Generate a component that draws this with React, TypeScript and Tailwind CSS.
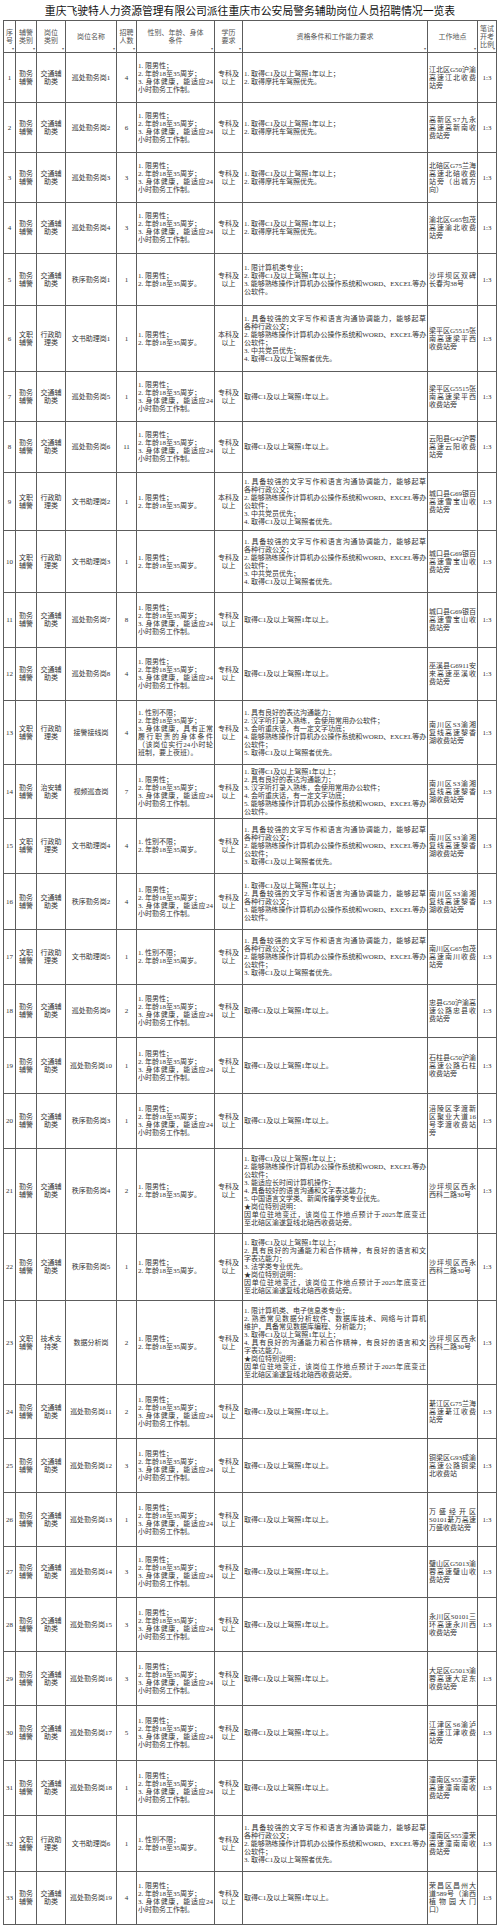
import type { ReactNode } from "react";

type Row = {
  kind: string[];
  cat: string[];
  name: string;
  count: number;
  body: string[];
  edu: string[];
  req: string[];
  place: string[];
  h: string;
};

const QIN = ["勤务", "辅警"];
const WEN = ["文职", "辅警"];
const JT = ["交通辅", "助类"];
const XZ = ["行政助", "理类"];
const ZK = ["专科及", "以上"];
const BK = ["本科及", "以上"];

const A = ["1. 限男性；", "2. 年龄18至35周岁；", "3. 身体健康，能适应24", "小时勤务工作制。"];
const B = ["1. 限男性；", "2. 年龄18至35周岁。"];
const C = ["1. 性别不限；", "2. 年龄18至35周岁。"];

const Q1 = ["1. 取得C1及以上驾照1年以上；", "2. 取得摩托车驾照优先。"];
const Q2 = ["取得C1及以上驾照1年以上。"];
const OFFICE = "能够熟练操作计算机办公操作系统和WORD、EXCEL等办";
const WEN4 = [
  "1. 具备较强的文字写作和语言沟通协调能力，能够起草",
  "各种行政公文；",
  "2. " + OFFICE,
  "公软件；",
  "3. 中共党员优先；",
  "4. 取得C1及以上驾照者优先。",
];
const WEN3 = [
  "1. 具备较强的文字写作和语言沟通协调能力，能够起草",
  "各种行政公文；",
  "2. " + OFFICE,
  "公软件；",
  "3. 取得C1及以上驾照者优先。",
];
const MOVE = [
  "★岗位特别说明：",
  "因单位驻地变迁，该岗位工作地点预计于2025年底变迁",
  "至北碚区渝遂复线北碚西收费站旁。",
];

const NC = ["南川区S3渝湘", "复线高速黎香", "湖收费站旁"];
const CK = ["城口县G69银百", "高速雪宝山收", "费站旁"];
const LP = ["梁平区G5515张", "南高速梁平西", "收费站旁"];
const SPB = ["沙坪坝区西永", "西科二路30号"];
const TN = ["潼南区S55潼荣", "高速潼南南收", "费站旁"];

const rows: Row[] = [
  { kind: QIN, cat: JT, name: "巡处勤务岗1", count: 4, body: A, edu: ZK, req: Q1, place: ["江北区G50沪渝", "高速江北收费", "站旁"], h: "h-[50px]" },
  { kind: QIN, cat: JT, name: "巡处勤务岗2", count: 6, body: A, edu: ZK, req: Q1, place: ["高新区S7九永", "高速高新南收", "费站旁"], h: "h-[50px]" },
  { kind: QIN, cat: JT, name: "巡处勤务岗3", count: 3, body: A, edu: ZK, req: Q1, place: ["北碚区G75兰海", "高速北碚收费", "站旁（出城方", "向）"], h: "h-[50px]" },
  { kind: QIN, cat: JT, name: "巡处勤务岗4", count: 3, body: A, edu: ZK, req: Q1, place: ["渝北区G65包茂", "高速渝北收费", "站旁"], h: "h-[51px]" },
  {
    kind: QIN, cat: JT, name: "秩序勤务岗1", count: 1, body: B, edu: ZK,
    req: ["1. 限计算机类专业；", "2. 取得C1及以上驾照1年以上；", "3. " + OFFICE, "公软件。"],
    place: ["沙坪坝区双碑", "长春沟38号"], h: "h-[52px]",
  },
  { kind: WEN, cat: XZ, name: "文书助理岗1", count: 1, body: B, edu: BK, req: WEN4, place: LP, h: "h-[66px]" },
  { kind: QIN, cat: JT, name: "巡处勤务岗5", count: 1, body: A, edu: ZK, req: Q2, place: LP, h: "h-[50px]" },
  { kind: QIN, cat: JT, name: "巡处勤务岗6", count: 11, body: A, edu: ZK, req: Q2, place: ["云阳县G42沪蓉", "高速云阳收费", "站旁"], h: "h-[51px]" },
  { kind: WEN, cat: XZ, name: "文书助理岗2", count: 1, body: B, edu: BK, req: WEN4, place: CK, h: "h-[58px]" },
  { kind: WEN, cat: XZ, name: "文书助理岗3", count: 1, body: B, edu: ZK, req: WEN4, place: CK, h: "h-[62px]" },
  { kind: QIN, cat: JT, name: "巡处勤务岗7", count: 8, body: A, edu: ZK, req: Q2, place: CK, h: "h-[55px]" },
  { kind: QIN, cat: JT, name: "巡处勤务岗8", count: 4, body: A, edu: ZK, req: Q2, place: ["巫溪县G6911安", "来高速巫溪收", "费站旁"], h: "h-[53px]" },
  {
    kind: WEN, cat: XZ, name: "接警接线岗", count: 4,
    body: ["1. 性别不限；", "2. 年龄18至35周岁；", "3. 身体健康，具有正常", "履行职责的身体条件", "（该岗位实行24小时轮", "班制，要上夜班）。"],
    edu: ZK,
    req: [
      "1. 具有良好的表达沟通能力；",
      "2. 汉字听打录入熟练，会使用常用办公软件；",
      "3. 会听重庆话，有一定文字功底；",
      "4. " + OFFICE,
      "公软件；",
      "5. 取得C1及以上驾照者优先。",
    ],
    place: NC, h: "h-[64px]",
  },
  {
    kind: QIN, cat: ["治安辅", "助类"], name: "视频巡查岗", count: 7, body: A, edu: ZK,
    req: [
      "1. 取得C1及以上驾照1年以上；",
      "2. 具有良好的表达沟通能力；",
      "3. 汉字听打录入熟练，会使用常用办公软件；",
      "4. 会听重庆话，有一定文字功底；",
      "5. " + OFFICE,
      "公软件。",
    ],
    place: NC, h: "h-[54px]",
  },
  { kind: WEN, cat: XZ, name: "文书助理岗4", count: 4, body: C, edu: ZK, req: WEN3, place: NC, h: "h-[55px]" },
  {
    kind: QIN, cat: JT, name: "秩序勤务岗2", count: 4, body: A, edu: ZK,
    req: [
      "1. 取得C1及以上驾照1年以上；",
      "2. 具备较强的文字写作和语言沟通协调能力，能够起草",
      "各种行政公文；",
      "3. " + OFFICE,
      "公软件。",
    ],
    place: NC, h: "h-[56px]",
  },
  { kind: WEN, cat: XZ, name: "文书助理岗5", count: 1, body: C, edu: ZK, req: WEN3, place: ["南川区G65包茂", "高速南川收费", "站旁"], h: "h-[55px]" },
  { kind: QIN, cat: JT, name: "巡处勤务岗9", count: 2, body: A, edu: ZK, req: Q2, place: ["忠县G50沪渝高", "速公路忠县收", "费站旁"], h: "h-[53px]" },
  { kind: QIN, cat: JT, name: "巡处勤务岗10", count: 1, body: A, edu: ZK, req: Q2, place: ["石柱县G50沪渝", "高速公路石柱", "收费站旁"], h: "h-[56px]" },
  { kind: QIN, cat: JT, name: "秩序勤务岗3", count: 1, body: A, edu: ZK, req: Q2, place: ["涪陵区李渡新", "区聚业大道16", "号李渡收费站", "旁"], h: "h-[55px]" },
  {
    kind: QIN, cat: JT, name: "秩序勤务岗4", count: 2, body: B, edu: ZK,
    req: [
      "1. 取得C1及以上驾照1年以上；",
      "2. " + OFFICE,
      "公软件；",
      "3. 能适应长时间计算机操作；",
      "4. 具备较好的语言沟通和文字表达能力；",
      "5. 中国语言文学类、新闻传播学类专业优先。",
      ...MOVE,
    ],
    place: SPB, h: "h-[85px]",
  },
  {
    kind: QIN, cat: JT, name: "秩序勤务岗5", count: 1, body: B, edu: ZK,
    req: [
      "1. 取得C1及以上驾照1年以上；",
      "2. 具有良好的沟通能力和合作精神，有良好的语言和文",
      "字表达能力；",
      "3. 法学类专业优先。",
      ...MOVE,
    ],
    place: SPB, h: "h-[67px]",
  },
  {
    kind: WEN, cat: ["技术支", "持类"], name: "数据分析岗", count: 2, body: B, edu: ZK,
    req: [
      "1. 限计算机类、电子信息类专业；",
      "2. 熟悉常见数据分析软件、数据库技术、网络与计算机",
      "维护，具备常见数据库编程、分析能力；",
      "3. 取得C1及以上驾照1年以上；",
      "4. 具有良好的沟通能力和合作精神，有良好的语言和文",
      "字表达能力。",
      ...MOVE,
    ],
    place: SPB, h: "h-[84px]",
  },
  { kind: QIN, cat: JT, name: "巡处勤务岗11", count: 2, body: A, edu: ZK, req: Q2, place: ["綦江区G75兰海", "高速綦江收费", "站旁"], h: "h-[54px]" },
  { kind: QIN, cat: JT, name: "巡处勤务岗12", count: 3, body: A, edu: ZK, req: Q2, place: ["铜梁区G93成渝", "高速公路铜梁", "北收费站"], h: "h-[54px]" },
  { kind: QIN, cat: JT, name: "巡处勤务岗13", count: 1, body: A, edu: ZK, req: Q2, place: ["万盛经开区", "S0101綦万高速", "万盛收费站旁"], h: "h-[54px]" },
  { kind: QIN, cat: JT, name: "巡处勤务岗14", count: 3, body: A, edu: ZK, req: Q2, place: ["璧山区G5013渝", "蓉高速璧山收", "费站旁"], h: "h-[51px]" },
  { kind: QIN, cat: JT, name: "巡处勤务岗15", count: 3, body: A, edu: ZK, req: Q2, place: ["永川区S0101三", "环高速永川西", "收费站旁"], h: "h-[54px]" },
  { kind: QIN, cat: JT, name: "巡处勤务岗16", count: 3, body: A, edu: ZK, req: Q2, place: ["大足区G5013渝", "蓉高速大足东", "收费站旁"], h: "h-[54px]" },
  { kind: QIN, cat: JT, name: "巡处勤务岗17", count: 5, body: A, edu: ZK, req: Q2, place: ["江津区S6渝泸", "高速江津收费", "站旁"], h: "h-[55px]" },
  { kind: QIN, cat: JT, name: "巡处勤务岗18", count: 1, body: A, edu: ZK, req: Q2, place: TN, h: "h-[55px]" },
  { kind: WEN, cat: XZ, name: "文书助理岗6", count: 1, body: C, edu: ZK, req: WEN3, place: TN, h: "h-[56px]" },
  { kind: QIN, cat: JT, name: "巡处勤务岗19", count: 4, body: A, edu: ZK, req: Q2, place: ["荣昌区昌州大", "道589号（渝西", "植物园大门", "口）"], h: "h-[53px]" },
];

const cell = "border border-[#5c5c5c] align-middle overflow-hidden";

// a line spreads to the cell width when the item wraps onto the next line
const wraps = (lines: string[], i: number, all?: boolean) =>
  i < lines.length - 1 && (all || !/^(\d\.|★|因)/.test(lines[i + 1]));

function Lines({ lines, left, all }: { lines: string[]; left?: boolean; all?: boolean }) {
  return (
    <div className={left ? "text-left" : "text-center"}>
      {lines.map((l, i) => (
        <div
          key={i}
          className={`whitespace-nowrap ${
            left && wraps(lines, i, all) ? "text-justify [text-align-last:justify]" : ""
          } ${l.includes("EXCEL") ? "tracking-[-0.15px]" : ""}`}
        >
          {l}
        </div>
      ))}
    </div>
  );
}

function Head({ children }: { children: ReactNode }) {
  return (
    <th className={`${cell} relative px-[1px] font-normal text-[#555]`}>
      {children}
      <span className="absolute bottom-[1px] right-[1px] text-[4px] leading-none text-[#666]">▾</span>
    </th>
  );
}

export default function App() {
  return (
    <div className="min-h-[1928px] w-[500px] bg-white font-['Liberation_Serif','Noto_Sans_CJK_SC',serif] text-[#333]">
      <div className="flex h-[20px] items-center justify-center pt-[2px]">
        <h1 className="w-[414px] whitespace-nowrap text-center text-[10.8px] font-normal leading-none text-[#111]">
          重庆飞驶特人力资源管理有限公司派往重庆市公安局警务辅助岗位人员招聘情况一览表
        </h1>
      </div>
      <table className="ml-[3px] w-[493px] table-fixed border-collapse text-[7px] leading-[8px]">
        <colgroup>
          <col className="w-[12px]" />
          <col className="w-[21px]" />
          <col className="w-[29px]" />
          <col className="w-[51px]" />
          <col className="w-[20px]" />
          <col className="w-[78px]" />
          <col className="w-[28px]" />
          <col className="w-[185px]" />
          <col className="w-[50px]" />
          <col className="w-[19px]" />
        </colgroup>
        <thead>
          <tr className="h-[32px]">
            <Head><Lines lines={["序", "号"]} /></Head>
            <Head><Lines lines={["辅警", "类别"]} /></Head>
            <Head><Lines lines={["岗位", "类别"]} /></Head>
            <Head>岗位名称</Head>
            <Head><Lines lines={["招聘", "人数"]} /></Head>
            <Head><Lines lines={["性别、年龄、身体", "条件"]} /></Head>
            <Head><Lines lines={["学历", "要求"]} /></Head>
            <Head>资格条件和工作能力要求</Head>
            <Head>工作地点</Head>
            <Head><Lines lines={["笔试", "开考", "比例"]} /></Head>
          </tr>
        </thead>
        <tbody>
          {rows.map((r, i) => (
            <tr key={i} className={r.h}>
              <td className={`${cell} text-center`}>{i + 1}</td>
              <td className={cell}><Lines lines={r.kind} /></td>
              <td className={cell}><Lines lines={r.cat} /></td>
              <td className={`${cell} text-center`}>{r.name}</td>
              <td className={`${cell} text-center`}>{r.count}</td>
              <td className={`${cell} px-[1px]`}><Lines lines={r.body} left /></td>
              <td className={cell}><Lines lines={r.edu} /></td>
              <td className={`${cell} px-[1px]`}><Lines lines={r.req} left /></td>
              <td className={`${cell} px-[1px]`}><Lines lines={r.place} left all /></td>
              <td className={`${cell} text-center`}>1:3</td>
            </tr>
          ))}
        </tbody>
      </table>
    </div>
  );
}
